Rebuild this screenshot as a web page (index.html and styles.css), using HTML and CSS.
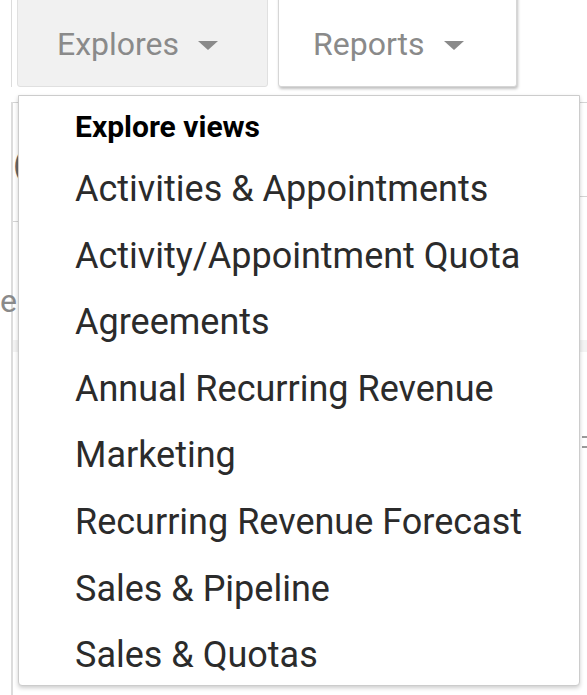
FILE: index.html
```html
<!DOCTYPE html>
<html>
<head>
<meta charset="utf-8">
<link rel="stylesheet" href="styles.css">
</head>
<body>
<div class="page">
  <div class="toolbar">
    <button class="tab tab-active">Explores <span class="caret"></span></button>
    <button class="tab tab-raised">Reports <span class="caret"></span></button>
  </div>
  <div class="backdrop">
    <div class="bg-line bg-line-top"></div>
    <div class="bg-glyph-paren">(</div>
    <div class="bg-line bg-line-right"></div>
    <div class="bg-line bg-line-left"></div>
    <div class="bg-glyph-e">e</div>
    <div class="bg-band"></div>
    <div class="bg-mark bg-mark-1"></div>
    <div class="bg-mark bg-mark-2"></div>
    <div class="bg-foot">lavage motion concepts</div>
  </div>
  <div class="menu">
    <div class="menu-head">Explore views</div>
    <ul class="menu-list">
      <li>Activities &amp; Appointments</li>
      <li>Activity/Appointment Quota</li>
      <li>Agreements</li>
      <li>Annual Recurring Revenue</li>
      <li>Marketing</li>
      <li>Recurring Revenue Forecast</li>
      <li>Sales &amp; Pipeline</li>
      <li>Sales &amp; Quotas</li>
    </ul>
  </div>
</div>
</body>
</html>
```
FILE: styles.css
```css
html, body {
  margin: 0;
  padding: 0;
  background: #ffffff;
  overflow: hidden;
}
body {
  font-family: Roboto, "Liberation Sans", sans-serif;
}
.page {
  position: relative;
  width: 587px;
  height: 695px;
  overflow: hidden;
}
.toolbar {
  display: flex;
  gap: 10px;
  margin-top: -12px;
  margin-left: 11px;
  padding-left: 5px;
  border-left: 1px solid #dcdcdc;
}
.tab {
  height: 99px;
  padding: 12px 0 0 0;
  border-radius: 3px;
  font-family: Roboto, "Liberation Sans", sans-serif;
  font-size: 32px;
  color: #8a8a8a;
  display: flex;
  align-items: center;
  justify-content: flex-start;
  gap: 19px;
}
.tab-active {
  width: 251px;
  padding-left: 39px;
  background: #f1f1f1;
  border: 1px solid #e0e0e0;
}
.tab-raised {
  width: 239px;
  padding-left: 34px;
  background: #ffffff;
  border: 1px solid #d6d6d6;
  box-shadow: 1px 2px 3px rgba(0,0,0,0.25);
}
.caret {
  width: 0;
  height: 0;
  border-left: 10px solid transparent;
  border-right: 10px solid transparent;
  border-top: 9px solid #8a8a8a;
  margin-top: 3px;
}
.backdrop {
  margin-left: 11px;
  border-left: 2px solid #dcdcdc;
  height: 620px;
  position: relative;
}
.bg-line {
  height: 0;
  border-top: 1px solid #d4d4d4;
}
.bg-line-top {
  margin-top: 15px;
}
.bg-glyph-paren {
  margin-top: 44px;
  margin-left: 0;
  font-size: 34px;
  line-height: 34px;
  color: #666;
}
.bg-line-right {
  margin-top: 15px;
  margin-left: auto;
  width: 10px;
}
.bg-line-left {
  margin-top: 24px;
  width: 10px;
}
.bg-glyph-e {
  margin-top: 62px;
  margin-left: -13px;
  font-size: 32px;
  line-height: 34px;
  color: #8a8a8a;
}
.bg-band {
  margin-top: 22px;
  height: 12px;
  background: #f3f3f3;
}
.bg-mark {
  margin-left: auto;
  width: 5px;
  height: 2px;
  background: #9a9a9a;
}
.bg-mark-1 {
  margin-top: 84px;
}
.bg-mark-2 {
  margin-top: 8px;
}
.bg-foot {
  position: absolute;
  left: 92px;
  top: 596px;
  font-size: 34px;
  letter-spacing: 4px;
  color: #555;
  white-space: nowrap;
}
.menu {
  position: absolute;
  left: 18px;
  top: 95px;
  width: 562px;
  height: 591px;
  box-sizing: border-box;
  background: #ffffff;
  border: 1px solid #cccccc;
  border-radius: 0 0 4px 4px;
  box-shadow: 0 2px 4px rgba(0,0,0,0.2);
  padding: 12px 0 0 56px;
}
.menu-head {
  font-size: 30px;
  font-weight: bold;
  color: #000;
  line-height: 37px;
  margin-bottom: 11px;
}
.menu-list {
  list-style: none;
  margin: 0;
  padding: 0;
}
.menu-list li {
  font-size: 36px;
  color: #2b2b2b;
  line-height: 66.6px;
  white-space: nowrap;
}
```
